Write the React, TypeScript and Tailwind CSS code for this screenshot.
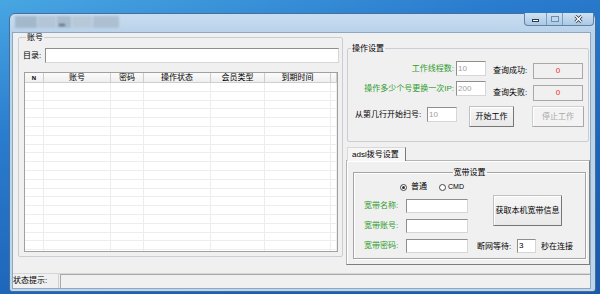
import type { ReactNode } from 'react';

const font = "font-['Liberation_Sans','Noto_Sans_CJK_SC',sans-serif]";

function Field({ className, children, dim }: { className: string; children?: ReactNode; dim?: boolean }) {
  return (
    <div
      className={`bg-white border border-[#d6d6d6] border-t-[#8e8e8e] border-l-[#8e8e8e] flex items-center pl-[1px] ${dim ? 'text-[#a0a0a0]' : 'text-black'} ${className}`}
    >
      {children}
    </div>
  );
}

function Btn({ className, children, disabled }: { className: string; children: ReactNode; disabled?: boolean }) {
  return (
    <div
      className={`flex items-center justify-center border rounded-[1px] shadow-[inset_1px_1px_0_#fff] ${
        disabled
          ? 'border-[#cfcfcf] border-r-[#a8a8a8] border-b-[#a8a8a8] text-[#a8a8a8] bg-[#f3f3f3]'
          : 'border-[#c0c0c0] border-r-[#767676] border-b-[#767676] text-black bg-[linear-gradient(#f6f6f6,#e8e8e8)]'
      } ${className}`}
    >
      {children}
    </div>
  );
}

function Radio({ checked }: { checked?: boolean }) {
  return (
    <span className="w-[7px] h-[7px] rounded-full border border-[#444] bg-white flex items-center justify-center">
      {checked && <span className="w-[3px] h-[3px] rounded-full bg-[#333]" />}
    </span>
  );
}

const cols = [
  { label: 'N', w: 'w-[19px]' },
  { label: '账号', w: 'w-[67px]' },
  { label: '密码', w: 'w-[33px]' },
  { label: '操作状态', w: 'w-[67px]' },
  { label: '会员类型', w: 'w-[54px]' },
  { label: '到期时间', w: 'w-[66px]' },
  { label: '', w: 'w-[6px]' },
];

/** 账号扫号工具 主窗口 */
export default function App() {
  return (
    <div
      className={`w-[600px] h-[294px] overflow-hidden bg-[linear-gradient(165deg,#48a6e2_0%,#2a7cce_30%,#1d63b6_70%,#1a5aa9_100%)] pl-[9px] pt-[13px] ${font} text-[8px] leading-[10px] text-black`}
    >
      {/* 窗口 */}
      <div className="w-[587px] h-[279px] rounded-t-[6px] rounded-b-[3px] border border-[#46709a] bg-[linear-gradient(#c9ddf0,#b9d3ea_18px,#bdd6ec)] flex flex-col">
        {/* 标题栏 */}
        <div className="h-[18px] flex items-start justify-between">
          <div className="mt-[2px] ml-[5px] flex gap-[1px] blur-[1.2px]">
            <div className="w-[22px] h-[12px] bg-[#a4b8cb]" />
            <div className="w-[18px] h-[12px] bg-[#b3c6d7]" />
            <div className="w-[14px] h-[12px] mt-[0px] bg-[#a8bccd] relative">
              <div className="absolute left-[2px] top-[8px] w-[6px] h-[2px] bg-[#56687a]" />
            </div>
            <div className="w-[20px] h-[12px] bg-[#b7c9d9]" />
            <div className="w-[26px] h-[12px] bg-[#adc0d2]" />
          </div>
          <div className="mr-[1px] -mt-[1px] h-[13px] flex rounded-b-[4px] border border-t-0 border-[#5f82a6] bg-[linear-gradient(#d0e2f2,#aac8e4)] overflow-hidden">
            <div className="w-[22px] flex items-center justify-center border-r border-[#7d9cbb]">
              <div className="w-[7px] h-[3px] mt-[3px] bg-white border border-[#2c3a4a]" />
            </div>
            <div className="w-[16px] flex items-center justify-center border-r border-[#7d9cbb]">
              <div className="w-[8px] h-[6px] border border-[#6a8db0] bg-[#c0d6ea]" />
            </div>
            <div className="w-[30px] flex items-center justify-center">
              <svg width="9" height="8" viewBox="0 0 9 8">
                <path d="M1.5 1 L7.5 7 M7.5 1 L1.5 7" stroke="#2c3a4a" strokeWidth="3" />
                <path d="M1.5 1 L7.5 7 M7.5 1 L1.5 7" stroke="#fff" strokeWidth="1.4" />
              </svg>
            </div>
          </div>
        </div>

        {/* 客户区 */}
        <div className="mx-[2px] w-[579px] h-[257px] bg-[#f0f0f0] border border-[#8ea8c2] flex flex-col">
          <div className="h-[240px] flex">
            {/* 账号 */}
            <fieldset className="ml-[5px] w-[325px] self-start border border-[#c8ced4] rounded-[2px] pl-[4px] pr-[3px] pb-[4px]">
              <legend className="ml-[3px] px-[1px] leading-[9px]">账号</legend>
              <div className="mt-[6px] flex items-center">
                <span className="w-[22px]">目录:</span>
                <Field className="flex-1 h-[15px]" />
              </div>
              <div className="mt-[9px] ml-[1px] w-[314px] h-[180px] border border-[#a0a0a0] bg-white overflow-hidden flex flex-col">
                <div className="h-[10px] flex bg-[linear-gradient(#fbfbfb,#efefef)] border-b border-[#cfcfcf]">
                  {cols.map((c, i) => (
                    <div
                      key={i}
                      className={`${c.w} shrink-0 border-r border-[#cdcdcd] flex items-center justify-center ${i === 0 ? 'text-[6px] font-bold' : ''}`}
                    >
                      {c.label}
                    </div>
                  ))}
                </div>
                {Array.from({ length: 20 }).map((_, r) => (
                  <div key={r} className="h-[8.8px] shrink-0 flex border-b border-[#ededed]">
                    {cols.map((c, i) => (
                      <div key={i} className={`${c.w} shrink-0 border-r border-[#ededed]`} />
                    ))}
                  </div>
                ))}
              </div>
            </fieldset>

            {/* 右侧 */}
            <div className="ml-[3px] w-[244px] flex flex-col">
              {/* 操作设置 */}
              <fieldset className="mt-[11px] ml-[1px] w-[242px] border border-[#c8ced4] rounded-[2px] pb-[14px]">
                <legend className="ml-[3px] px-[1px] leading-[9px]">操作设置</legend>
                <div className="mt-[8px] h-[20px] flex items-start">
                  <span className="w-[106px] h-[15px] flex items-center justify-end text-[#2e9b2e]">工作线程数:</span>
                  <Field dim className="ml-[2px] w-[30px] h-[15px]">10</Field>
                  <div className="ml-[7px] mt-[2px] h-[16px] flex items-center">
                    <span className="w-[40px]">查询成功:</span>
                    <div className="w-[50px] h-[16px] border border-[#a8a8a8] flex items-center justify-center text-[#f02a2a]">0</div>
                  </div>
                </div>
                <div className="h-[25px] flex items-start">
                  <span className="w-[106px] h-[15px] flex items-center justify-end text-[#2e9b2e]">操作多少个号更换一次IP:</span>
                  <Field dim className="ml-[2px] w-[30px] h-[15px]">200</Field>
                  <div className="ml-[7px] mt-[4px] h-[16px] flex items-center">
                    <span className="w-[40px]">查询失败:</span>
                    <div className="w-[50px] h-[16px] border border-[#a8a8a8] flex items-center justify-center text-[#f02a2a]">0</div>
                  </div>
                </div>
                <div className="flex items-start">
                  <span className="ml-[7px] mt-[1px] w-[72px] h-[15px] flex items-center">从第几行开始扫号:</span>
                  <Field dim className="mt-[1px] w-[30px] h-[15px]">10</Field>
                  <Btn className="ml-[12px] w-[45px] h-[21px]">开始工作</Btn>
                  <Btn disabled className="ml-[18px] w-[52px] h-[21px]">停止工作</Btn>
                </div>
              </fieldset>

              {/* 选项卡 */}
              <div className="mt-[5px] ml-[1px] w-[59px] h-[14px] border border-b-0 border-[#d8d8d8] border-r-[#7a7a7a] bg-[#f6f6f6] pl-[4px] flex items-center relative z-10 -mb-[1px]">
                adsl拨号设置
              </div>
              <div className="w-[244px] h-[105px] border border-[#b4b4b4] border-r-[#7e7e7e] border-b-[#7e7e7e] shadow-[inset_1px_1px_0_#fff] pt-[7px]">
                <fieldset className="ml-[6px] w-[233px] border border-[#a4a4a4] shadow-[inset_1px_1px_0_#fff,1px_1px_0_#fff] pb-[5px]">
                  <legend className="mx-auto px-[1px] leading-[9px]">宽带设置</legend>
                  <div className="mt-[6px] h-[8px] pl-[46px] flex items-center">
                    <Radio checked />
                    <span className="ml-[4px]">普通</span>
                    <span className="ml-[12px]">
                      <Radio />
                    </span>
                    <span className="ml-[2px] text-[7px]">CMD</span>
                  </div>
                  <div className="mt-[8px] pl-[10px] grid grid-cols-[42px_62px_1fr] grid-rows-[14px_14px_14px] gap-y-[6px]">
                    <span className="flex items-center text-[#2e9b2e]">宽带名称:</span>
                    <Field className="h-[14px]" />
                    <div className="row-span-2 -mt-[4px]">
                      <Btn className="ml-[25px] w-[69px] h-[31px]">获取本机宽带信息</Btn>
                    </div>
                    <span className="flex items-center text-[#2e9b2e]">宽带账号:</span>
                    <Field className="h-[14px]" />
                    <span className="flex items-center text-[#2e9b2e]">宽带密码:</span>
                    <Field className="h-[14px]" />
                    <div className="flex items-center">
                      <span className="ml-[9px] w-[40px] mt-[2px]">断网等待:</span>
                      <Field className="w-[19px] h-[14px]">3</Field>
                      <span className="ml-[5px] mt-[2px]">秒在连接</span>
                    </div>
                  </div>
                </fieldset>
              </div>
            </div>
          </div>

          {/* 状态栏 */}
          <div className="h-[15px] border-t border-[#d6d6d6] flex">
            <div className="w-[46px] border-r border-[#d0d0d0] flex items-center">状态提示:</div>
            <div className="ml-[1px] flex-1 border-l border-t border-[#a9a9a9]" />
          </div>
        </div>
      </div>
    </div>
  );
}
